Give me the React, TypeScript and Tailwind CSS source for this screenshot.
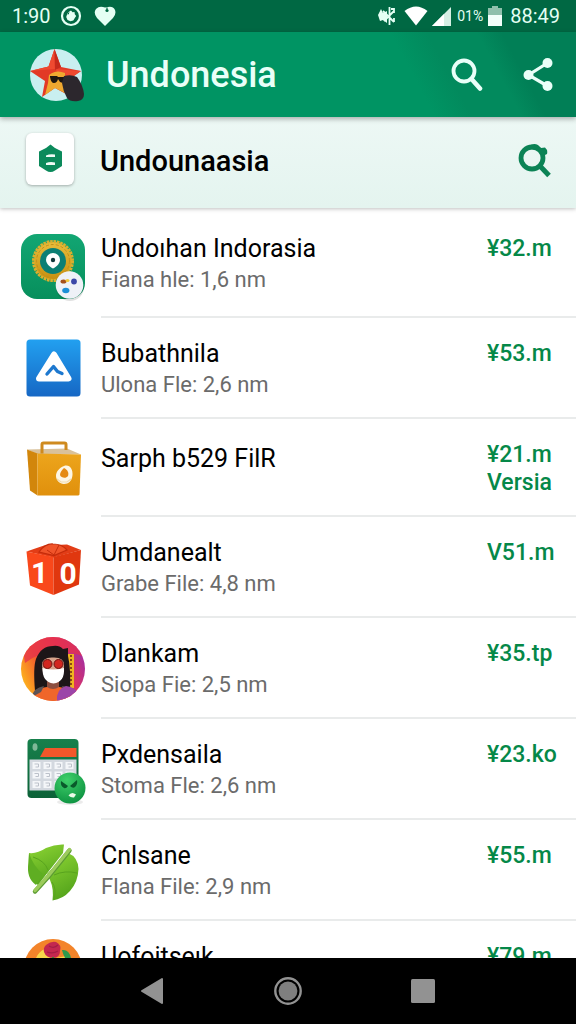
import React from 'react';

interface AppEntry {
  id: number;
  title: string;
  detail?: string;
  price: string;
  note?: string;
  icon: React.ReactNode;
}

const BadgeIcon = () => (
  <svg viewBox="0 0 64 64" className="w-16 h-16 overflow-visible" aria-hidden="true">
    <defs>
      <linearGradient id="badgeBg" x1="0" y1="0" x2="0" y2="1">
        <stop offset="0" stopColor="#12a673" />
        <stop offset="1" stopColor="#078f5c" />
      </linearGradient>
      <linearGradient id="badgeGold" x1="0" y1="0" x2="0" y2="1">
        <stop offset="0" stopColor="#e9bd3c" />
        <stop offset="1" stopColor="#c78f10" />
      </linearGradient>
    </defs>
    <rect x="0" y="0" width="64" height="65" rx="16" fill="url(#badgeBg)" />
    <circle cx="32" cy="27" r="19" fill="url(#badgeGold)" />
    <circle cx="32" cy="27" r="19.5" fill="none" stroke="#dcae2d" strokeWidth="3" strokeDasharray="2.6 0.8" />
    <circle cx="32" cy="27" r="16.500" fill="none" stroke="#c4901a" strokeWidth="1" strokeDasharray="3 2" />
    <circle cx="32" cy="27" r="13" fill="#0c7f74" />
    <path d="M25 25.500a7 6.500 0 0 1 14 0c0 4-3 7-7 9c-4-2-7-5-7-9z" fill="#fff" />
    <circle cx="32" cy="26" r="2.200" fill="#12383c" />
    <circle cx="49" cy="53" r="14" fill="#000" opacity="0.120" />
    <circle cx="48.500" cy="51" r="13.800" fill="#eef1f7" />
    <ellipse cx="42.500" cy="47.500" rx="3" ry="2" fill="#a4501c" />
    <ellipse cx="46.500" cy="46.500" rx="2" ry="1.500" fill="#f3c83a" />
    <circle cx="53" cy="47.500" r="2.900" fill="#3b48a8" />
    <ellipse cx="44.800" cy="56.500" rx="3.600" ry="2.800" fill="#1d8fd6" />
  </svg>
);

const TriangleIcon = () => (
  <svg viewBox="0 0 64 64" className="w-16 h-16" aria-hidden="true">
    <defs>
      <linearGradient id="triBg" x1="0" y1="0" x2="0" y2="1">
        <stop offset="0" stopColor="#22a0f0" />
        <stop offset="1" stopColor="#1667c4" />
      </linearGradient>
    </defs>
    <rect x="5.500" y="2.500" width="54" height="57" rx="3.500" fill="url(#triBg)" />
    <path d="M33 17.500L47.500 41.500H18z" fill="#fff" stroke="#fff" strokeWidth="6" strokeLinejoin="round" />
    <path d="M26 37L32.500 29.500L36.500 34.500L41 36.500" fill="none" stroke="#1d78cf" strokeWidth="3.400" strokeLinecap="round" strokeLinejoin="round" />
  </svg>
);

const BagIcon = () => (
  <svg viewBox="0 0 64 64" className="w-16 h-16" aria-hidden="true">
    <defs>
      <linearGradient id="bagFront" x1="0" y1="0" x2="0" y2="1">
        <stop offset="0" stopColor="#eda51c" />
        <stop offset="1" stopColor="#e0900c" />
      </linearGradient>
    </defs>
    <path d="M6 13.500L46 12.500L60 18.500L16 18z" fill="#d9c19a" />
    <path d="M6 13.500L16.500 17.500V59.500L9 54.500z" fill="#d2860b" />
    <path d="M16.500 17.500L60 18.500L58.500 58.500Q58 59.500 57 59.500H16.500z" fill="url(#bagFront)" />
    <path d="M21 17.500V8.500Q21 7 22.500 7H43.500Q45 7 45 8.500V14" fill="none" stroke="#cf8a1e" strokeWidth="3" />
    <path d="M43 30c6-2 9 4 8.500 9c-.5 6-4 9-8.500 9s-8-4-8-8s3-8 8-10z" fill="#fdf6e6" />
    <path d="M43 32c4 2 5 5 4 8c-2 3-7 2-8-1c0-3 2-5 4-7z" fill="#e58a14" />
    <path d="M36 43l4 3h6l4-3" fill="none" stroke="#f0d9ab" strokeWidth="1.200" />
  </svg>
);

const CubeIcon = () => (
  <svg viewBox="0 0 64 64" className="w-16 h-16" aria-hidden="true">
    <path d="M5.500 15.500L23 9.500L46 8.500L60 14L32.500 21.500z" fill="#e23d17" />
    <path d="M18 16Q24 7.500 32 8Q41 8 46 14L33 19.500z" fill="#f0542a" stroke="#c42c0b" strokeWidth="1.200" />
    <path d="M26 14L33 19L38 9" fill="none" stroke="#c42c0b" strokeWidth="1" />
    <path d="M5.500 15.500L32.500 21V59L9 49.500z" fill="#f9481b" />
    <path d="M32.500 21L60 14L58 48.500L32.500 59z" fill="#e0370f" />
    <text x="18.500" y="47" textAnchor="middle" fontFamily="Roboto, sans-serif" fontWeight="700" fontSize="30" fill="#fff">1</text>
    <text x="47" y="48" textAnchor="middle" fontFamily="Roboto, sans-serif" fontWeight="700" fontSize="30" fill="#fff">0</text>
  </svg>
);

const AvatarIcon = () => (
  <svg viewBox="0 0 64 64" className="w-16 h-16 overflow-visible" aria-hidden="true">
    <defs>
      <linearGradient id="avatarBg" x1="0" y1="0.800" x2="1" y2="0.400">
        <stop offset="0" stopColor="#ffc21a" />
        <stop offset="0.350" stopColor="#f4602c" />
        <stop offset="0.700" stopColor="#e63358" />
        <stop offset="1" stopColor="#a92f9c" />
      </linearGradient>
      <clipPath id="avatarClip">
        <circle cx="32" cy="32" r="32" />
      </clipPath>
    </defs>
    <g clipPath="url(#avatarClip)">
      <rect width="64" height="64" fill="url(#avatarBg)" />
      <path d="M0 0H64V20Q30 6 4 26z" fill="#e6304c" opacity="0.750" />
      <path d="M47 17h6v34h-6z" fill="#eeb41f" />
      <path d="M50 18v32" stroke="#8c4a14" strokeWidth="2" strokeDasharray="2 2" />
      <path d="M14 54Q12 30 15 22Q20 9 32 9Q38 8 42 12L47 11L47 19Q50 32 49 54z" fill="#1d1618" />
      <rect x="26" y="42" width="12" height="11" fill="#8d4f40" />
      <path d="M21 28Q21 20 32 20.500Q43 20 43 28Q43 44 32 46Q22 44 21 28z" fill="#d8a48c" />
      <path d="M11 64Q13 51 26 50Q32 54 38 50Q50 51 52 64z" fill="#f0662a" />
      <path d="M11 60Q12 51 23 49L20 55zM53 56Q50 50 41 49L43 54z" fill="#5d5355" />
      <path d="M21.500 31Q32 34 43 31Q44 45 32.500 46.500Q21 45 21.500 31z" fill="#fff" />
      <circle cx="26.500" cy="27" r="4.500" fill="#d2271f" stroke="#6b1512" strokeWidth="1" />
      <circle cx="37.500" cy="27" r="4.500" fill="#d2271f" stroke="#6b1512" strokeWidth="1" />
      <path d="M36 64Q35 52 45 49Q55 50 58 58L52 64z" fill="#9c45a8" />
    </g>
  </svg>
);

const CalculatorIcon = () => (
  <svg viewBox="0 0 64 64" className="w-16 h-16 overflow-visible" aria-hidden="true">
    <defs>
      <linearGradient id="calcBg" x1="0" y1="0" x2="0" y2="1">
        <stop offset="0" stopColor="#17804c" />
        <stop offset="1" stopColor="#0c6238" />
      </linearGradient>
      <radialGradient id="calcBall" cx="0.400" cy="0.250" r="0.800">
        <stop offset="0" stopColor="#3fd06a" />
        <stop offset="1" stopColor="#0c9140" />
      </radialGradient>
    </defs>
    <rect x="6.500" y="1" width="51" height="59" rx="4" fill="url(#calcBg)" />
    <ellipse cx="14" cy="9" rx="2.500" ry="3.800" fill="#7fb897" />
    <path d="M24 10H55.500V19H19z" fill="#f2572a" />
    <path d="M8.500 21.500H55.500V52.500H8.500z" fill="#d3d8df" />
    {[0, 1, 2].map((row) =>
      [0, 1, 2, 3].map((col) => (
        <g key={`${row}-${col}`}>
          <rect x={11.5 + col * 11} y={24 + row * 9.5} width="8" height="7" fill="#f4f6f9" />
          <path d={`M${13.5 + col * 11} ${26 + row * 9.5}h4v3h-3`} fill="none" stroke="#bcc1ca" strokeWidth="1" />
        </g>
      ))
    )}
    <ellipse cx="49" cy="64" rx="13" ry="3" fill="#000" opacity="0.080" />
    <circle cx="49" cy="50" r="15.500" fill="url(#calcBall)" />
    <path d="M40 43l7 5q-2 3-4 2q-4-2-3-7zM56 42l-7 6q3 3 5 1q3-3 2-7z" fill="#0a5a2b" />
    <path d="M47.500 57.500Q50.500 53 55 56.500L53 59.500Q50 60 47.500 57.500z" fill="#eafbe8" />
  </svg>
);

const LeafIcon = () => (
  <svg viewBox="0 0 64 64" className="w-16 h-16" aria-hidden="true">
    <defs>
      <linearGradient id="leafFill" x1="0" y1="0" x2="0.400" y2="1">
        <stop offset="0" stopColor="#8fd635" />
        <stop offset="1" stopColor="#55a51c" />
      </linearGradient>
    </defs>
    <path d="M8 14Q16 15 25 9Q34 5 43 5.500L42 14L17 46Q6 39 7.500 24z" fill="url(#leafFill)" />
    <path d="M8 14Q12 27 22 35L15 46Q5 39 7.500 24z" fill="#5fae22" />
    <path d="M47 14Q57 18 57.500 30Q57 43 49 52Q42 60 31.500 61.500Q33 50 29 41L26 35z" fill="url(#leafFill)" />
    <path d="M31 43Q36 50 33 60M33 36Q44 31 56 34M12 18Q24 22 27 31" fill="none" stroke="#58a31e" strokeWidth="1" />
    <path d="M14 52.500L28 37L48.500 11.500" fill="none" stroke="#5c9c33" strokeWidth="4.400" strokeLinecap="round" />
    <path d="M14 51.500L28 36L48.500 10.500" fill="none" stroke="#9ccb5c" strokeWidth="3.400" strokeLinecap="round" />
  </svg>
);

const FlowerIcon = () => (
  <svg viewBox="0 0 64 64" className="w-16 h-16 overflow-visible" aria-hidden="true">
    <circle cx="32" cy="28" r="29" fill="#f3842a" />
    <path d="M12 28Q15 12 24 9L34 18L46 16Q53 22 53 36H12z" fill="#f8d84a" />
    <path d="M25 5Q30 1 35 2Q41 5 39 11Q39 17 33 18Q25 18 23 12Q22 8 25 5z" fill="#c3274f" />
    <path d="M28 6Q33 9 37 5M26 12Q32 14 37 11" fill="none" stroke="#a31c45" strokeWidth="1.200" />
    <path d="M41 10Q48 9 50 18L48 22Q43 19 41 10z" fill="#2f9a4c" />
    <path d="M32 17V30" stroke="#3b8a35" strokeWidth="2" />
  </svg>
);

const entries: AppEntry[] = [
  { id: 1, title: 'Undoıhan Indorasia', detail: 'Fiana hle: 1,6 nm', price: '¥32.m', icon: <BadgeIcon /> },
  { id: 2, title: 'Bubathnila', detail: 'Ulona Fle: 2,6 nm', price: '¥53.m', icon: <TriangleIcon /> },
  { id: 3, title: 'Sarph b529 FilR', price: '¥21.m', note: 'Versia', icon: <BagIcon /> },
  { id: 4, title: 'Umdanealt', detail: 'Grabe File: 4,8 nm', price: 'V51.m', icon: <CubeIcon /> },
  { id: 5, title: 'Dlankam', detail: 'Siopa Fie: 2,5 nm', price: '¥35.tp', icon: <AvatarIcon /> },
  { id: 6, title: 'Pxdensaila', detail: 'Stoma Fle: 2,6 nm', price: '¥23.ko', icon: <CalculatorIcon /> },
  { id: 7, title: 'Cnlsane', detail: 'Flana File: 2,9 nm', price: '¥55.m', icon: <LeafIcon /> },
  { id: 8, title: 'Uofoitseık', price: '¥79.m', icon: <FlowerIcon /> },
];

const StatusBar = () => (
  <div className="h-8 shrink-0 flex items-center justify-between pl-3 pr-4 bg-[#006843] text-[#e4fff4]">
    <div className="flex items-center gap-2">
      <span className="text-xl leading-8 w-10">1:90</span>
      <svg viewBox="0 0 22 22" className="w-[22px] h-[22px]" aria-hidden="true">
        <circle cx="11" cy="11" r="9" fill="none" stroke="currentColor" strokeWidth="2.200" />
        <path d="M11 5.500l1.500 1.800l2-.3l.3 2.200l1.400 1.800l-1.400 2l-1.500 2.500l-2.800.8l-3-1.300l-1.300-3l1-3l1.800-2.300z" fill="currentColor" />
        <path d="M8 9.500l1-2" stroke="#006843" strokeWidth="1" />
      </svg>
      <svg viewBox="0 0 22 22" className="w-[22px] h-[22px] ml-1" aria-hidden="true">
        <path d="M11 21L3 13Q-1 8 2 4Q5 1 9 2L11 2.500L14 2Q19 1 21 5Q22.500 9 19 13z" fill="currentColor" />
        <path d="M13 2.500v2" stroke="#006843" strokeWidth="1.200" />
        <circle cx="13" cy="5.500" r="1.600" fill="#006843" />
      </svg>
    </div>
    <div className="flex items-center">
      <svg viewBox="0 0 18 20" className="w-[18px] h-5 mr-2" aria-hidden="true">
        <path d="M0 9l3-6l2 4l4-2v12l-4-3l-3 1z" fill="currentColor" />
        <path d="M5 5l11 11M6 15L16 5M11.500 1v18M13 3h3v4M16 12v4" fill="none" stroke="currentColor" strokeWidth="1.800" />
      </svg>
      <svg viewBox="0 0 24 20" className="w-6 h-5" aria-hidden="true">
        <path d="M12 19.500L.5 5Q12-4 23.500 5z" fill="#fff" />
      </svg>
      <svg viewBox="0 0 20 20" className="w-5 h-5 ml-1" aria-hidden="true">
        <path d="M0 20L19 1V20z" fill="#d5efe4" />
        <path d="M0 20L12 8V20z" fill="#fff" />
      </svg>
      <span className="text-sm leading-8 ml-1 w-7 text-center">01%</span>
      <svg viewBox="0 0 14 22" className="w-[14px] h-[22px] mx-1" aria-hidden="true">
        <path d="M0 3h4V1h6v2h4v18H0z" fill="#8fc0ac" />
        <path d="M0 10h14v11H0z" fill="#f2fffa" />
      </svg>
      <span className="text-xl leading-8 ml-1">88:49</span>
    </div>
  </div>
);

const Header = () => (
  <header className="relative z-10 h-[85px] shrink-0 flex items-center pl-[29px] pr-4 shadow-[0_2px_5px_rgba(0,0,0,0.3)] bg-[linear-gradient(62deg,#009463_0%,#009463_70%,#028a5d_76%,#028a5d_84%,#017f56_88%,#017f56_100%)]">
    <svg viewBox="0 0 56 56" className="w-14 h-14" aria-hidden="true">
      <circle cx="27" cy="28" r="26" fill="#c9eff0" />
      <path d="M25.500 2L32 20L52 24L38 34L39 48L26 41L13 50L16 34L1 24L19.500 19.500z" fill="#e23a26" />
      <path d="M25.500 2L26 22L1 24L19.500 19.500zM52 24L26 22L36 35z" fill="#ee4a30" />
      <path d="M25.500 2L32 20L26 23z" fill="#c62a1b" />
      <path d="M20 28Q27 22 36 26L36 46L26 41L16 48L19 36z" fill="#efa830" />
      <path d="M21 29h7l1 1h7v4q-2 3-5 1l-2-3q-1 4-4 4t-4-6z" fill="#1f1710" />
      <path d="M35 29Q42 27 48 30Q54 38 55 47Q55 53 49 54Q41 55 38 51Q34 44 33 36z" fill="#2c272d" />
    </svg>
    <h1 className="flex-1 ml-[21px] text-[36px] leading-10 font-medium text-[#e9fff8]">Undonesia</h1>
    <button type="button" aria-label="Search" className="w-11 h-11 flex items-center justify-center text-[#e9fff8]">
      <svg viewBox="0 0 32 34" className="w-8 h-[34px]" aria-hidden="true">
        <circle cx="13" cy="13" r="10.500" fill="none" stroke="currentColor" strokeWidth="3.800" />
        <path d="M20.500 21L29 30.500" stroke="currentColor" strokeWidth="4.600" strokeLinecap="round" />
      </svg>
    </button>
    <button type="button" aria-label="Share" className="w-11 h-11 ml-[27px] flex items-center justify-center text-[#e9fff8]">
      <svg viewBox="0 0 30 34" className="w-[30px] h-[34px]" aria-hidden="true">
        <path d="M24.500 5L5.500 17L24.500 28" fill="none" stroke="currentColor" strokeWidth="3.200" />
        <circle cx="24.500" cy="5" r="5" fill="currentColor" />
        <circle cx="5.500" cy="17" r="5" fill="currentColor" />
        <circle cx="24.500" cy="28" r="5" fill="currentColor" />
      </svg>
    </button>
  </header>
);

const SectionBar = () => (
  <section className="relative h-[91px] shrink-0 flex items-center pl-[26px] pr-[23px] bg-linear-to-b from-[#edf8f5] to-[#e4f4ef] shadow-[0_1px_4px_rgba(0,0,0,0.25)]">
    <div className="w-12 h-[52px] mb-2 flex items-center justify-center bg-white rounded-md shadow-[0_1px_3px_rgba(0,0,0,0.3)]">
      <svg viewBox="0 0 24 29" className="w-6 h-[29px]" aria-hidden="true">
        <path d="M12.500 .5L17 4L24 7.500V22L17 26.500Q12.500 29.500 8 26.500L1 22V7.500L8 4z" fill="#0b8a5b" />
        <path d="M8 11.500Q12 9.500 17 10.500V13H8zM8 19Q12 17.500 17 18.500V21H8z" fill="#effaf5" />
      </svg>
    </div>
    <h2 className="flex-1 ml-[26px] mb-1 text-[29px] leading-8 font-medium text-black">Undounaasia</h2>
    <button type="button" aria-label="Search list" className="w-9 h-9 mb-1 flex items-center justify-center text-[#0b8355]">
      <svg viewBox="0 0 34 36" className="w-[34px] h-9" aria-hidden="true">
        <circle cx="14" cy="15" r="11" fill="none" stroke="currentColor" strokeWidth="4.800" />
        <path d="M10 4Q15-1 20 2L23 5L27 4.500Q30 7 29 11L25 13L20 7L11 6z" fill="currentColor" />
        <path d="M21.500 22.500L31 32.500" stroke="currentColor" strokeWidth="5" />
      </svg>
    </button>
  </section>
);

const EntryRow: React.FC<{ entry: AppEntry }> = ({ entry }) => (
  <li className={`flex first:h-[105px] ${entry.note ? 'h-[98px]' : 'h-[101px]'}`}>
    <div className="w-[101px] shrink-0 pl-[21px] flex items-center">{entry.icon}</div>
    <div className="flex-1 min-w-0 flex items-start justify-between pr-[25px] border-b-2 border-[#e9ebeb]">
      <div className={`min-w-0 whitespace-nowrap ${entry.note ? 'pt-6' : 'pt-5'}`}>
        <h3 className="text-[25px] leading-8 text-black">{entry.title}</h3>
        {entry.detail && <p className="text-[22px] leading-[30px] text-[#6b6b6b]">{entry.detail}</p>}
      </div>
      <div className="w-16 shrink-0 pt-[22px] text-[23px] leading-7 font-medium whitespace-nowrap text-[#058848]">
        <div>{entry.price}</div>
        {entry.note && <div>{entry.note}</div>}
      </div>
    </div>
  </li>
);

const NavBar = () => (
  <nav className="relative z-10 h-[66px] shrink-0 flex items-center justify-center gap-[91px] bg-black text-[#929292]">
    <button type="button" aria-label="Back" className="w-11 h-11 flex items-center justify-center">
      <svg viewBox="0 0 24 28" className="w-6 h-7" aria-hidden="true">
        <path d="M21 2V26L1 14z" fill="currentColor" stroke="currentColor" strokeWidth="2" strokeLinejoin="round" />
      </svg>
    </button>
    <button type="button" aria-label="Home" className="w-11 h-11 flex items-center justify-center">
      <svg viewBox="0 0 28 28" className="w-7 h-7" aria-hidden="true">
        <circle cx="14" cy="14" r="12.700" fill="none" stroke="currentColor" strokeWidth="2.400" />
        <circle cx="14" cy="14" r="9.400" fill="#7f7f7f" />
      </svg>
    </button>
    <button type="button" aria-label="Recent apps" className="w-11 h-11 flex items-center justify-center">
      <svg viewBox="0 0 24 24" className="w-6 h-6" aria-hidden="true">
        <rect width="24" height="24" rx="1.500" fill="currentColor" />
      </svg>
    </button>
  </nav>
);

export default function App() {
  return (
    <div className="h-screen flex flex-col overflow-hidden bg-white font-[Roboto,sans-serif]">
      <StatusBar />
      <Header />
      <SectionBar />
      <main className="flex-1 min-h-0 overflow-hidden pt-[5px]">
        <ul>
          {entries.map((entry) => (
            <EntryRow key={entry.id} entry={entry} />
          ))}
        </ul>
      </main>
      <NavBar />
    </div>
  );
}
